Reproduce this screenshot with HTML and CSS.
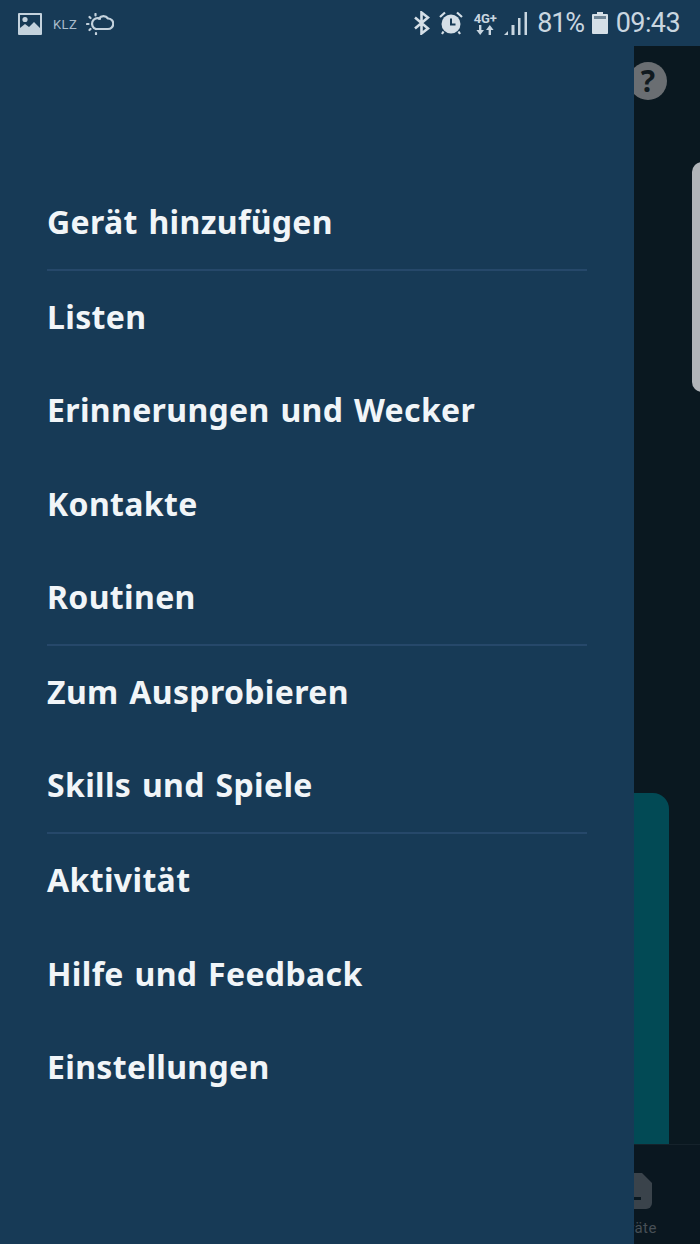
FILE: index.html
```html
<!DOCTYPE html>
<html lang="de">
<head>
    <meta charset="UTF-8">
    <meta name="viewport" content="width=device-width, initial-scale=1.0">
    <title>Alexa Menü</title>
    <link rel="stylesheet" href="styles.css">
</head>
<body>
    <div class="screen">
        <!-- Status bar -->
        <div class="status-bar">
            <div class="status-left">
                <svg class="icon-photo" width="24" height="22" viewBox="0 0 24 22">
                    <path fill="#c4d2dd" fill-rule="evenodd" d="M1 0h22a1 1 0 0 1 1 1v20a1 1 0 0 1-1 1H1a1 1 0 0 1-1-1V1a1 1 0 0 1 1-1zm1 2v13l5-4 4 3 5-5 6 6V2z"/>
                    <circle cx="7" cy="6.500" r="2.600" fill="#c4d2dd"/>
                </svg>
                <span class="carrier">KLZ</span>
                <svg class="icon-weather" width="28" height="22" viewBox="0 0 28 22" fill="none" stroke="#c4d2dd" stroke-width="2.200" stroke-linecap="round">
                    <path d="M10 16h12a5 5 0 0 0 0-10.500 5.500 5.500 0 0 0-9 0"/>
                    <path d="M14 5.800a5.500 5.500 0 1 0-4 10.200"/>
                    <path d="M9.500 1v1.500M3.500 4l1 1M1 11h1.500M3.500 17l1-1M10 20v1.200"/>
                </svg>
            </div>
            <div class="status-right">
                <svg class="icon-bt" width="17" height="24" viewBox="0 0 17 24" fill="none" stroke="#d5dfe7" stroke-width="2.600">
                    <path d="M2 6.500l13 11-6.500 5V1.500l6.500 5-13 11"/>
                </svg>
                <svg class="icon-alarm" width="24" height="24" viewBox="0 0 24 24">
                    <circle cx="12" cy="13" r="9.500" fill="#d5dfe7"/>
                    <path d="M12 7.500V13.500h4.500" fill="none" stroke="#173a56" stroke-width="2"/>
                    <path d="M1 6l5-4.500M23 6l-5-4.500M4.500 20.500L3 23M19.500 20.500L21 23" fill="none" stroke="#d5dfe7" stroke-width="2.200"/>
                </svg>
                <div class="net">
                    <span class="net-label">4G+</span>
                    <svg width="18" height="10" viewBox="0 0 18 10" fill="#c9d6e0">
                        <path d="M3 0h2.400v5H8L4.200 10 .4 5H3zM12.600 10h2.400V5h2.600L13.800 0 10 5h2.600z"/>
                    </svg>
                </div>
                <svg class="icon-signal" width="23" height="23" viewBox="0 0 23 23" fill="#c9d6e0">
                    <path d="M0 23l4-4v4zM7.500 13h3v10h-3zM14 6h2.500v17H14zM20.500 0H23v23h-2.500z"/>
                </svg>
                <span class="status-text percent">81%</span>
                <svg class="icon-battery" width="16" height="22" viewBox="0 0 16 22">
                    <path fill="#d5dfe7" d="M5 0h6v2h4a1 1 0 0 1 1 1v18a1 1 0 0 1-1 1H1a1 1 0 0 1-1-1V3a1 1 0 0 1 1-1h4z"/>
                    <path fill="#6d8496" d="M2 4h12v3H2z"/>
                </svg>
                <span class="status-text">09:43</span>
            </div>
        </div>

        <div class="content">
            <!-- Navigation drawer -->
            <nav class="drawer">
                <div class="menu-group">
                    <a class="menu-item">Gerät hinzufügen</a>
                </div>
                <div class="menu-group">
                    <a class="menu-item">Listen</a>
                    <a class="menu-item">Erinnerungen und Wecker</a>
                    <a class="menu-item">Kontakte</a>
                    <a class="menu-item">Routinen</a>
                </div>
                <div class="menu-group">
                    <a class="menu-item">Zum Ausprobieren</a>
                    <a class="menu-item">Skills und Spiele</a>
                </div>
                <div class="menu-group">
                    <a class="menu-item">Aktivität</a>
                    <a class="menu-item">Hilfe und Feedback</a>
                    <a class="menu-item">Einstellungen</a>
                </div>
            </nav>

            <!-- Dimmed page behind the drawer -->
            <div class="backdrop">
                <div class="help-btn">?</div>
                <div class="white-card"></div>
                <div class="teal-card"></div>
                <div class="bottom-nav">
                    <svg class="nav-icon" width="38" height="36" viewBox="0 0 38 36">
                        <path fill="#3a434b" d="M6 0h22l10 10v20a6 6 0 0 1-6 6H6z"/>
                        <path fill="#0a1820" d="M17 7h3v16h-3zM9 24h18v3H9z"/>
                    </svg>
                    <span class="nav-label">Geräte</span>
                </div>
            </div>
        </div>
    </div>
</body>
</html>
```

FILE: styles.css
```css
body {
    margin: 0;
    background-color: #0a1820;
    font-family: 'Noto Sans', sans-serif;
}

.screen {
    width: 700px;
    height: 1244px;
    display: flex;
    flex-direction: column;
    overflow: hidden;
}

.status-bar {
    height: 46px;
    flex-shrink: 0;
    display: flex;
    justify-content: space-between;
    align-items: center;
    padding: 0 20px 0 18px;
    background-color: #173a56;
    color: #c9d6e0;
}

.status-left,
.status-right {
    display: flex;
    align-items: center;
}

.icon-photo {
    margin-top: 2px;
}

.carrier {
    margin: 2px 10px 0 11px;
    font-family: 'Roboto', sans-serif;
    font-size: 13px;
    letter-spacing: 0.4px;
    color: #a9bccb;
}

.icon-weather {
    margin-left: -1px;
    margin-top: 2px;
}

.status-right svg {
    margin-right: 9px;
}

.status-right .icon-alarm {
    margin-right: 10px;
}

.net {
    width: 24px;
    margin-right: 7px;
    display: flex;
    flex-direction: column;
    align-items: center;
}

.net svg {
    margin-right: 0;
}

.net-label {
    font-family: 'Roboto', sans-serif;
    font-size: 13px;
    font-weight: 700;
    line-height: 13px;
    letter-spacing: -0.2px;
}

.status-right .icon-signal {
    margin-right: 10px;
}

.status-right .icon-battery {
    margin-left: 8px;
    margin-right: 8px;
}

.status-text {
    font-family: 'Roboto', sans-serif;
    font-size: 27px;
    letter-spacing: -0.6px;
    line-height: 30px;
}

.status-text.percent {
    letter-spacing: -1.2px;
}

.content {
    flex: 1;
    display: flex;
}

.drawer {
    position: relative;
    z-index: 1;
    width: 634px;
    flex-shrink: 0;
    padding-top: 130px;
    box-sizing: border-box;
    background-color: #173a56;
}

.menu-group {
    margin: 0 47px;
    border-bottom: 2px solid #26486a;
}

.menu-group:last-child {
    border-bottom: none;
}

.menu-item {
    display: block;
    height: 93.2px;
    line-height: 92px;
    font-size: 32px;
    font-weight: 700;
    letter-spacing: 0.35px;
    word-spacing: 2px;
    color: #f1f5f8;
    white-space: nowrap;
}

.backdrop {
    flex: 1;
    min-width: 0;
    display: flex;
    flex-direction: column;
    background-color: #0a1820;
}

.help-btn {
    width: 38px;
    height: 38px;
    margin: 16px 0 0 -5px;
    flex-shrink: 0;
    border-radius: 50%;
    background-color: #6a6e72;
    color: #101a20;
    font-size: 30px;
    font-weight: 700;
    line-height: 38px;
    text-align: center;
}

.white-card {
    width: 40px;
    height: 230px;
    margin: 62px 0 0 58px;
    flex-shrink: 0;
    border-radius: 10px 0 0 10px;
    background-color: #b1b5b9;
}

.teal-card {
    width: 60px;
    flex: 1;
    margin: 401px 0 0 -25px;
    border-radius: 0 16px 0 0;
    background-color: #024a55;
}

.bottom-nav {
    height: 100px;
    flex-shrink: 0;
    margin-left: -32px;
    border-top: 1px solid #15222b;
    box-sizing: border-box;
    background-color: #0a1720;
}

.nav-icon {
    display: block;
    margin: 28px 0 0 12px;
}

.nav-label {
    display: block;
    margin-top: 10px;
    margin-left: 8px;
    font-family: 'Roboto', sans-serif;
    font-size: 15px;
    letter-spacing: 0.5px;
    color: #474f56;
}
```
